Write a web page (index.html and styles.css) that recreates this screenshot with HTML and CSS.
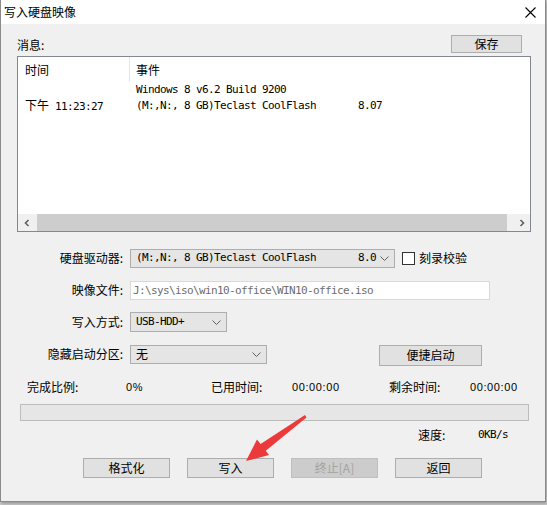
FILE: index.html
```html
<!DOCTYPE html>
<html>
<head>
    <meta charset="UTF-8">
    <title>写入硬盘映像</title>
    <link rel="stylesheet" href="styles.css">
</head>
<body>
    <div class="window">
        <div class="titlebar">
            <span class="title">写入硬盘映像</span>
            <svg class="close" width="11" height="11" viewBox="0 0 11 11">
                <path d="M0.5 0.5 L10.5 10.5 M10.5 0.5 L0.5 10.5" stroke="#000" stroke-width="1.1" fill="none"/>
            </svg>
        </div>

        <div class="client">
            <div class="msg-head">
                <span>消息:</span>
                <button class="btn save-btn">保存</button>
            </div>

            <!-- 消息列表 -->
            <div class="list">
                <div class="list-header">
                    <div class="col-time">时间</div>
                    <div class="col-event">事件</div>
                </div>
                <div class="list-row">
                    <div class="col-time"></div>
                    <div class="col-event mono">Windows 8 v6.2 Build 9200</div>
                </div>
                <div class="list-row">
                    <div class="col-time"><span class="cjk">下午</span><span class="mono"> 11:23:27</span></div>
                    <div class="col-event mono">(M:,N:, 8 GB)Teclast CoolFlash       8.07</div>
                </div>
                <div class="list-fill"></div>
                <div class="hscroll">
                    <div class="sb-btn">
                        <svg width="8" height="8" viewBox="0 0 8 8"><path d="M5.5 1 L2.5 4 L5.5 7" stroke="#606060" stroke-width="1.6" fill="none"/></svg>
                    </div>
                    <div class="sb-track"><div class="sb-thumb"></div></div>
                    <div class="sb-btn">
                        <svg width="8" height="8" viewBox="0 0 8 8"><path d="M2.5 1 L5.5 4 L2.5 7" stroke="#606060" stroke-width="1.6" fill="none"/></svg>
                    </div>
                </div>
            </div>

            <!-- 选项 -->
            <div class="form">
                <div class="form-row">
                    <label class="form-label">硬盘驱动器:</label>
                    <div class="combo combo-drive">
                        <span class="mono">(M:,N:, 8 GB)Teclast CoolFlash       8.0</span>
                        <svg class="chev" width="9" height="5" viewBox="0 0 9 5"><path d="M0.5 0.5 L4.5 4.5 L8.5 0.5" stroke="#606060" fill="none"/></svg>
                    </div>
                    <span class="check"></span>
                    <span class="check-label">刻录校验</span>
                </div>
                <div class="form-row">
                    <label class="form-label">映像文件:</label>
                    <div class="text-input mono">J:\sys\iso\win10-office\WIN10-office.iso</div>
                </div>
                <div class="form-row">
                    <label class="form-label">写入方式:</label>
                    <div class="combo combo-mode">
                        <span class="mono">USB-HDD+</span>
                        <svg class="chev" width="9" height="5" viewBox="0 0 9 5"><path d="M0.5 0.5 L4.5 4.5 L8.5 0.5" stroke="#606060" fill="none"/></svg>
                    </div>
                </div>
                <div class="form-row">
                    <label class="form-label">隐藏启动分区:</label>
                    <div class="combo combo-hide">
                        <span class="cjk">无</span>
                        <svg class="chev" width="9" height="5" viewBox="0 0 9 5"><path d="M0.5 0.5 L4.5 4.5 L8.5 0.5" stroke="#606060" fill="none"/></svg>
                    </div>
                    <button class="btn quick-btn">便捷启动</button>
                </div>
            </div>

            <!-- 进度 -->
            <div class="stats">
                <span>完成比例:</span>
                <span class="num">0%</span>
                <span>已用时间:</span>
                <span class="num">00:00:00</span>
                <span>剩余时间:</span>
                <span class="num">00:00:00</span>
            </div>
            <div class="progress"></div>
            <div class="speed">
                <span class="speed-label">速度:</span>
                <span class="mono">0KB/s</span>
            </div>

            <div class="actions">
                <button class="btn">格式化</button>
                <button class="btn">写入</button>
                <button class="btn" disabled>终止[A]</button>
                <button class="btn">返回</button>
            </div>
        </div>

        <svg class="arrow" width="547" height="505" viewBox="0 0 547 505">
            <polygon points="304,415 305.5,417.5 262,453 256.5,446" fill="#ec3a3a"/>
            <polygon points="245,461 256,439.5 268,455" fill="#ec3a3a"/>
        </svg>
    </div>
</body>
</html>
```

FILE: styles.css
```css
* {
    box-sizing: border-box;
}

body {
    margin: 0;
    width: 547px;
    height: 505px;
    background: #cfcfcf;
    font-family: "Noto Sans CJK SC", "Liberation Sans", sans-serif;
    font-size: 12px;
    color: #000;
    overflow: hidden;
}

.window {
    position: relative;
    width: 546px;
    height: 502px;
    background: #f0f0f0;
    border: 1px solid #8a8a8a;
    border-top: none;
    box-shadow: 1px 2px 3px rgba(0,0,0,0.25);
}

.titlebar {
    height: 24px;
    background: #fff;
    display: flex;
    align-items: center;
    justify-content: space-between;
    padding: 0 9px 0 3px;
}

.title {
    font-size: 12px;
    line-height: 16px;
}

.client {
    padding: 0 14px 0 16px;
}

.mono {
    font-family: "DejaVu Sans Mono", "Noto Sans CJK SC", monospace;
    font-size: 11px;
    letter-spacing: -0.62px;
    white-space: pre;
}

.cjk {
    font-family: "Noto Sans CJK SC", sans-serif;
    font-size: 12px;
}

.msg-head {
    margin-top: 11px;
    height: 18px;
    display: flex;
    justify-content: space-between;
    align-items: flex-end;
    line-height: 16px;
}

.btn {
    font-family: "Noto Sans CJK SC", "Liberation Sans", sans-serif;
    font-size: 12px;
    background: #e1e1e1;
    border: 1px solid #adadad;
    padding: 0;
    color: #000;
    line-height: 16px;
}

.btn:disabled {
    background: #cccccc;
    border-color: #bfbfbf;
    color: #a3a3a3;
}

.save-btn {
    width: 71px;
    height: 18px;
    margin-right: 9px;
}

.list {
    margin-top: 3px;
    height: 176px;
    border: 1px solid #828790;
    background: #fff;
    display: flex;
    flex-direction: column;
}

.list-header {
    height: 25px;
    display: flex;
    align-items: center;
    line-height: 16px;
}

.list-header .col-time {
    border-right: 1px solid #e5e5e5;
    height: 25px;
    display: flex;
    align-items: center;
}

.list-row {
    height: 16px;
    display: flex;
    align-items: center;
    line-height: 16px;
}

.col-time {
    width: 112px;
    padding-left: 7px;
}

.col-event {
    padding-left: 6px;
}

.list-fill {
    flex: 1;
}

.hscroll {
    height: 17px;
    display: flex;
    background: #f0f0f0;
}

.sb-btn {
    width: 17px;
    display: flex;
    align-items: center;
    justify-content: center;
}

.sb-track {
    flex: 1;
    padding: 0 6px 0 2px;
}

.sb-thumb {
    height: 100%;
    background: #cdcdcd;
}

.form {
    margin-top: 16px;
}

.form-row {
    height: 20px;
    margin-bottom: 12px;
    display: flex;
    align-items: center;
}

.form-label {
    width: 106px;
    text-align: right;
    margin-right: 7px;
    line-height: 16px;
}

.combo {
    height: 19px;
    background: #e5e5e5;
    border: 1px solid #adadad;
    display: flex;
    align-items: center;
    justify-content: space-between;
    padding: 0 5px 0 5px;
    line-height: 16px;
}

.combo-drive { width: 265px; }
.combo-mode { width: 97px; height: 20px; }
.combo-hide { width: 137px; }

.check {
    width: 13px;
    height: 13px;
    border: 1px solid #333;
    background: #fff;
    margin-left: 7px;
}

.check-label {
    margin-left: 4px;
    line-height: 16px;
}

.text-input {
    width: 360px;
    height: 19px;
    background: #fff;
    border: 1px solid #d9d9d9;
    color: #6d6d6d;
    padding-left: 2px;
    line-height: 17px;
}

.quick-btn {
    width: 103px;
    height: 21px;
    margin-left: 112px;
    margin-top: 2px;
}

.stats {
    margin-top: 15px;
    padding-left: 10px;
    display: grid;
    grid-template-columns: 99px 85px 81px 97px 81px auto;
    line-height: 16px;
}

.num {
    font-family: "Liberation Sans", sans-serif;
    font-size: 11px;
    letter-spacing: 0.6px;
}

.progress {
    margin: 9px 0 0 3px;
    width: 509px;
    height: 17px;
    background: #e6e6e6;
    border: 1px solid #bcbcbc;
}

.speed {
    margin-top: 6px;
    padding-left: 401px;
    display: flex;
    line-height: 16px;
}

.speed-label {
    width: 60px;
}

.actions {
    margin-top: 15px;
    padding-left: 66px;
    display: flex;
    gap: 17px;
}

.actions .btn {
    width: 87px;
    height: 20px;
}

.arrow {
    position: absolute;
    left: 0;
    top: 0;
    pointer-events: none;
}
```
